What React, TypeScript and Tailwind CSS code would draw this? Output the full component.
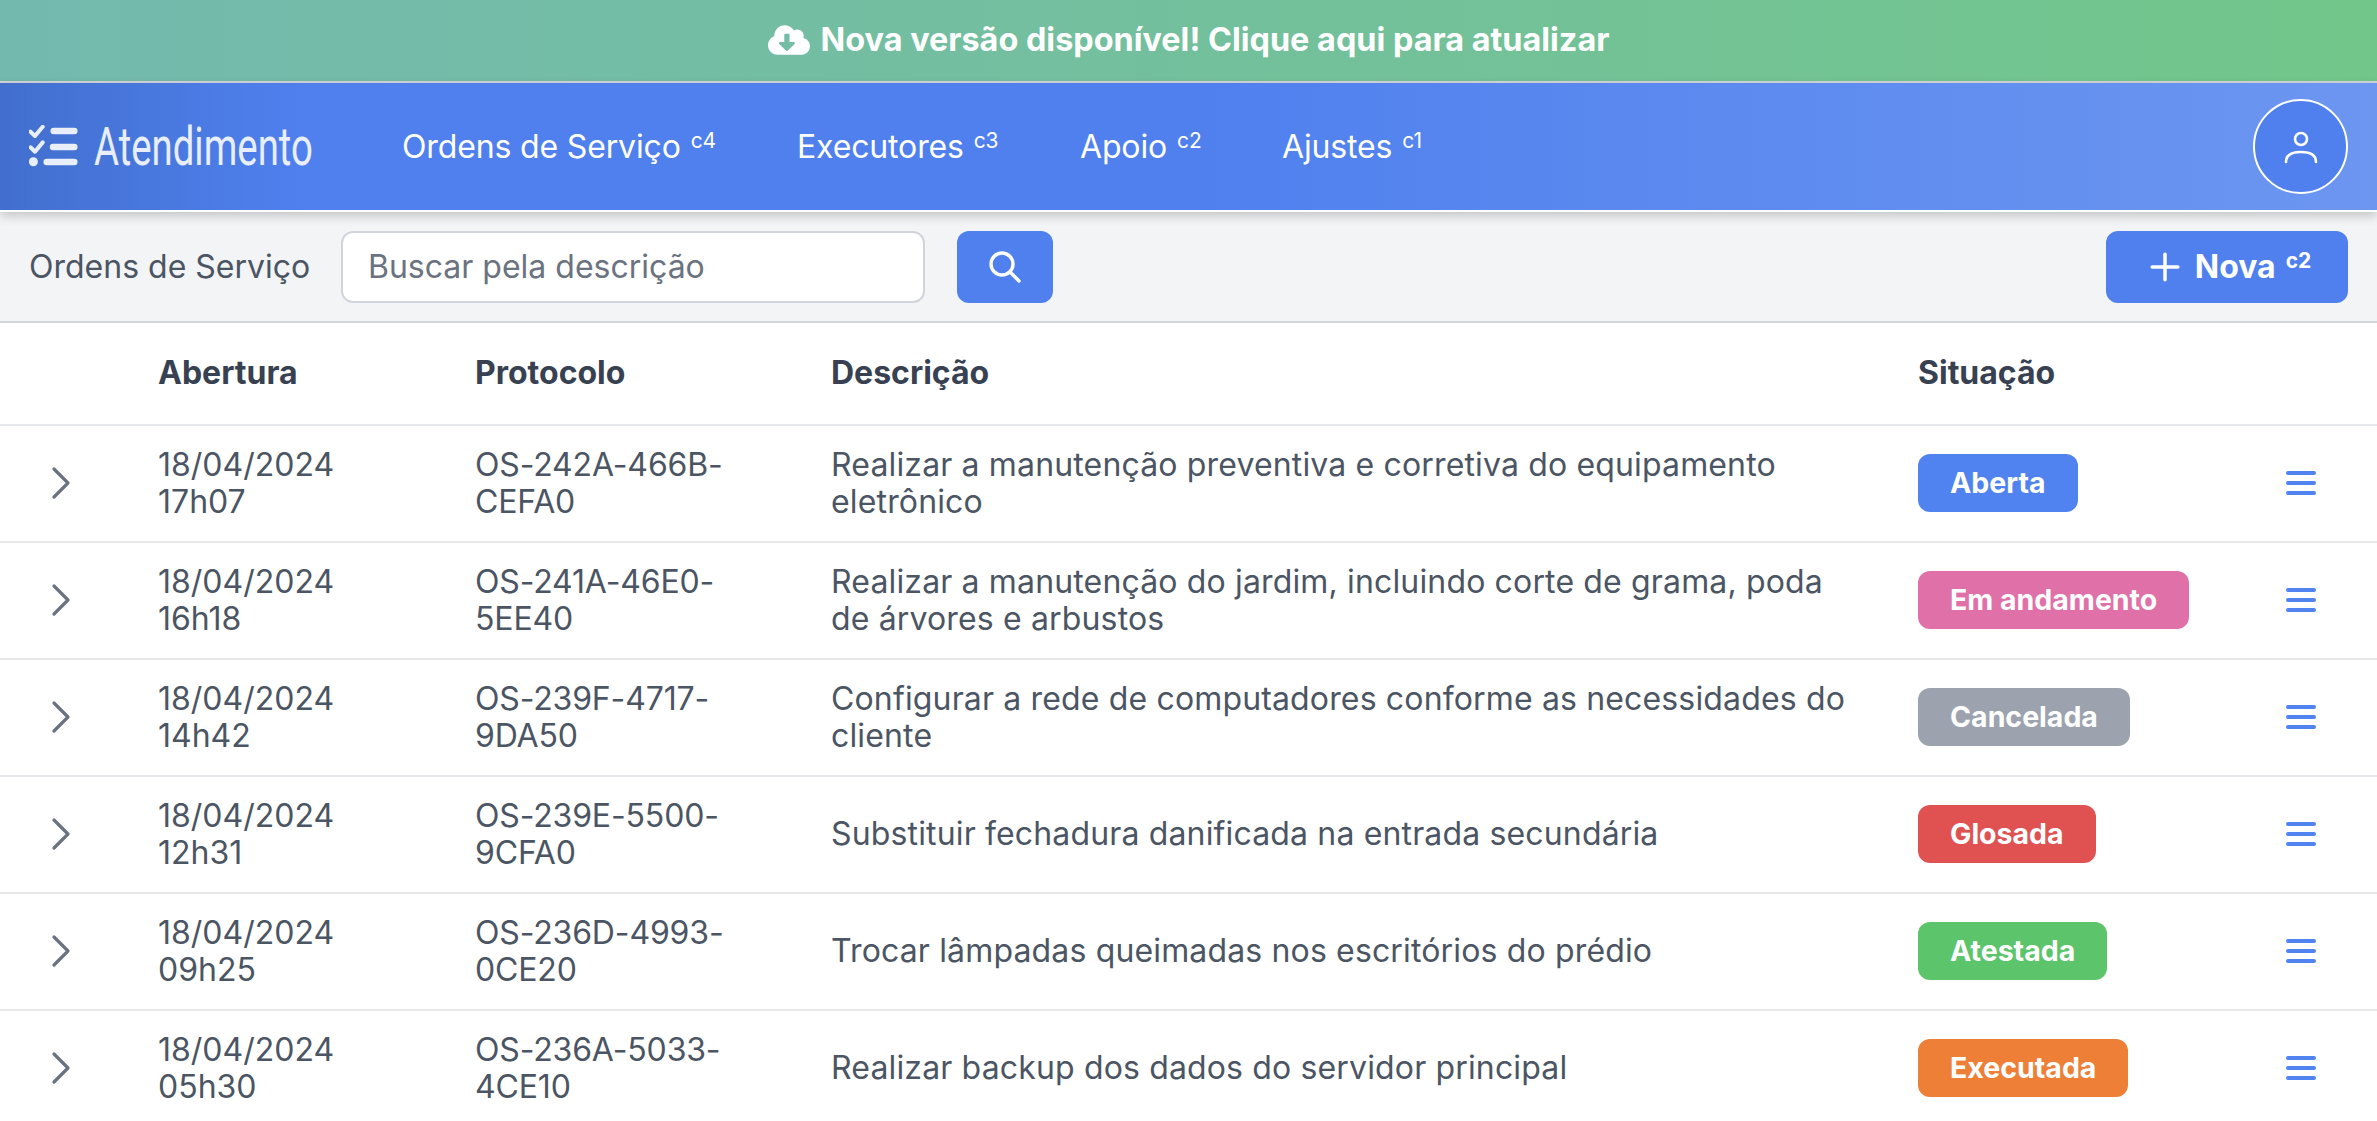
import { Plus, ChevronRight } from "lucide-react";
import { FaCloudDownloadAlt } from "react-icons/fa";

const rows = [
  { date: "18/04/2024", time: "17h07", protocol: "OS-242A-466B-CEFA0", text: "Realizar a manutenção preventiva e corretiva do equipamento eletrônico", status: "Aberta", badge: "bg-[#5083ef]" },
  { date: "18/04/2024", time: "16h18", protocol: "OS-241A-46E0-5EE40", text: "Realizar a manutenção do jardim, incluindo corte de grama, poda de árvores e arbustos", status: "Em andamento", badge: "bg-[#e071a8]" },
  { date: "18/04/2024", time: "14h42", protocol: "OS-239F-4717-9DA50", text: "Configurar a rede de computadores conforme as necessidades do cliente", status: "Cancelada", badge: "bg-[#9ca3af]" },
  { date: "18/04/2024", time: "12h31", protocol: "OS-239E-5500-9CFA0", text: "Substituir fechadura danificada na entrada secundária", status: "Glosada", badge: "bg-[#e05252]" },
  { date: "18/04/2024", time: "09h25", protocol: "OS-236D-4993-0CE20", text: "Trocar lâmpadas queimadas nos escritórios do prédio", status: "Atestada", badge: "bg-[#5cc46a]" },
  { date: "18/04/2024", time: "05h30", protocol: "OS-236A-5033-4CE10", text: "Realizar backup dos dados do servidor principal", status: "Executada", badge: "bg-[#ed7f37]" },
];

const links = [
  { label: "Ordens de Serviço", sup: "c4", width: "w-[395px]" },
  { label: "Executores", sup: "c3", width: "w-[283px]" },
  { label: "Apoio", sup: "c2", width: "w-[202px]" },
  { label: "Ajustes", sup: "c1", width: "" },
];

function LogoIcon() {
  return (
    <svg width="50" height="44" viewBox="0 0 50 44" fill="none" stroke="currentColor">
      <path d="M1.5 6.7L6 11l7.7-9.3M1.5 22.3L6 26.7l7.7-9.3" strokeWidth="4" strokeLinecap="round" strokeLinejoin="round" />
      <circle cx="4.4" cy="36.7" r="4.5" fill="currentColor" stroke="none" />
      <path d="M24.7 6h20.6M24 22h21.3M17.7 37h27.6" strokeWidth="6.5" strokeLinecap="round" />
    </svg>
  );
}

function UserIcon() {
  return (
    <svg width="34" height="34" viewBox="0 0 34 34" fill="none" stroke="white" strokeWidth="2.6" strokeLinecap="round">
      <circle cx="17" cy="9" r="6" />
      <path d="M2 32c0-7 5-10 15-10s15 3 15 10" />
    </svg>
  );
}

function SearchIcon() {
  return (
    <svg width="32" height="32" viewBox="0 0 32 32" fill="none" stroke="white" strokeWidth="3.4" strokeLinecap="round">
      <circle cx="13" cy="13" r="11" />
      <path d="M21 21l9 9" />
    </svg>
  );
}

function MenuLines() {
  return (
    <svg width="30" height="26" viewBox="0 0 30 26" fill="none" stroke="#5083ef" strokeWidth="4" strokeLinecap="round">
      <path d="M2 3h26M2 13h26M2 23h26" />
    </svg>
  );
}

export default function App() {
  return (
    <div className="h-[1121px] overflow-hidden bg-white font-['Inter',sans-serif] text-[32px] leading-[37px] text-[#4b5563]">
      {/* banner */}
      <div className="flex h-[83px] items-center justify-center gap-[11px] border-b-2 border-[#d4d5d8] bg-gradient-to-r from-[#74b9ae] to-[#72c68a] pb-[2px] text-[32.4px] font-bold text-white">
        <FaCloudDownloadAlt size={42} />
        <span>Nova versão disponível! Clique aqui para atualizar</span>
      </div>

      {/* nav */}
      <div className="relative z-10 flex h-[129px] items-center border-b-2 border-white bg-[linear-gradient(90deg,#426fce_0%,#4f80ee_13%,#4f80ee_50%,#6c96f0_100%)] pl-[29px] pr-[29px] shadow-[0_4px_10px_rgba(0,0,0,0.2)]">
        <div className="flex w-[373px] items-center gap-[15px] text-[#e8eefc]">
          <LogoIcon />
          <span className="inline-block w-[218px] origin-left scale-x-[0.71] whitespace-nowrap font-['Roboto',sans-serif] text-[54px] leading-none">Atendimento</span>
        </div>
        <nav className="flex flex-1 items-center tracking-[-0.15px] text-white">
          {links.map((l) => (
            <div key={l.label} className={l.width}>
              {l.label}
              <sup className="ml-[10px] text-[21px]">{l.sup}</sup>
            </div>
          ))}
        </nav>
        <button className="flex h-[95px] w-[95px] items-center justify-center rounded-full border-2 border-white bg-[#4f80ee]">
          <UserIcon />
        </button>
      </div>

      {/* toolbar */}
      <div className="flex h-[111px] items-center border-b-2 border-[#d4d5d8] bg-[#f3f4f6] pl-[29px] pr-[29px]">
        <span className="w-[312px]">Ordens de Serviço</span>
        <input
          className="h-[72px] w-[584px] rounded-[12px] border-2 border-[#d1d5db] bg-white px-[25px] placeholder:text-[#6b7280]"
          placeholder="Buscar pela descrição"
        />
        <button className="ml-[32px] flex h-[72px] w-[96px] items-center justify-center rounded-[12px] bg-[#4f80ee]">
          <SearchIcon />
        </button>
        <button className="ml-auto flex h-[72px] w-[242px] items-center justify-center gap-[8px] rounded-[12px] bg-[#4f80ee] font-bold text-white">
          <Plus size={44} strokeWidth={1.9} />
          <span>
            Nova<sup className="ml-[10px] text-[21px]">c2</sup>
          </span>
        </button>
      </div>

      {/* table */}
      <div className="grid h-[103px] grid-cols-[158px_317px_356px_1087px_1fr] items-center border-b-2 border-[#e5e7eb] pb-[2px] font-bold text-[#374151]">
        <div />
        <div>Abertura</div>
        <div>Protocolo</div>
        <div>Descrição</div>
        <div>Situação</div>
      </div>
      {rows.map((r) => (
        <div key={r.protocol} className="grid h-[117px] grid-cols-[158px_317px_356px_1087px_1fr] items-center border-b-2 border-[#e5e7eb] pb-[2px]">
          <div className="pl-[33px] text-[#6b7280]">
            <ChevronRight size={56} strokeWidth={1.4} />
          </div>
          <div>
            {r.date}
            <br />
            {r.time}
          </div>
          <div className="w-[280px] tracking-[-0.15px]">{r.protocol}</div>
          <div className="w-[1030px] tracking-[0.15px]">{r.text}</div>
          <div className="flex items-center justify-between pr-[61px]">
            <span className={`flex h-[58px] items-center rounded-[12px] px-[32px] text-[28.5px] font-bold text-white ${r.badge}`}>
              {r.status}
            </span>
            <MenuLines />
          </div>
        </div>
      ))}
    </div>
  );
}
